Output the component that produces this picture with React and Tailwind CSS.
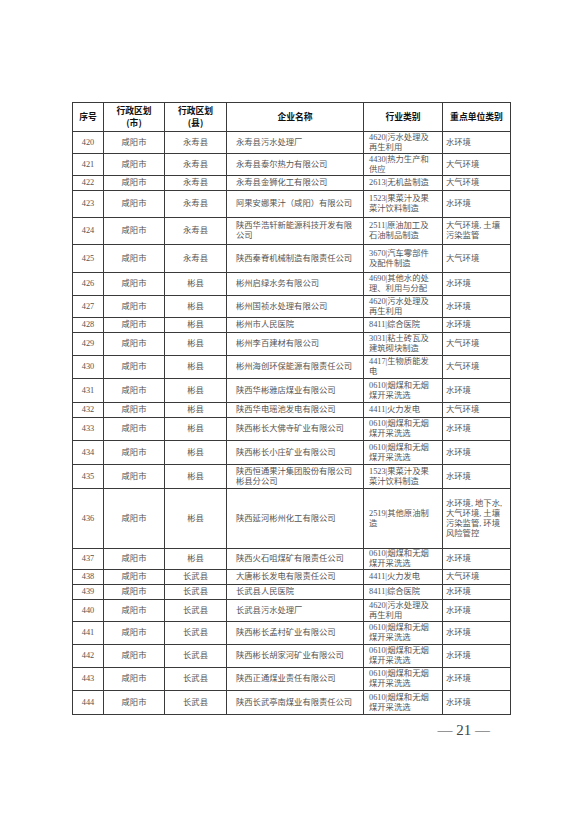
import React from 'react';

const rows = [
  { no: '420', county: '永寿县', name: ['永寿县污水处理厂'], ind: ['4620|污水处理及', '再生利用'], type: ['水环境'], h: 'h-[22px]' },
  { no: '421', county: '永寿县', name: ['永寿县泰尔热力有限公司'], ind: ['4430|热力生产和', '供应'], type: ['大气环境'], h: 'h-[22px]' },
  { no: '422', county: '永寿县', name: ['永寿县金狮化工有限公司'], ind: ['2613|无机盐制造'], type: ['大气环境'], h: 'h-[15px]' },
  { no: '423', county: '永寿县', name: ['阿果安娜果汁（咸阳）有限公司'], ind: ['1523|果菜汁及果', '菜汁饮料制造'], type: ['水环境'], h: 'h-[27px]' },
  { no: '424', county: '永寿县', name: ['陕西华浩轩新能源科技开发有限', '公司'], ind: ['2511|原油加工及', '石油制品制造'], type: ['大气环境, 土壤', '污染监管'], h: 'h-[27px]' },
  { no: '425', county: '永寿县', name: ['陕西秦脊机械制造有限责任公司'], ind: ['3670|汽车零部件', '及配件制造'], type: ['大气环境'], h: 'h-[28px]' },
  { no: '426', county: '彬县', name: ['彬州启绿水务有限公司'], ind: ['4690|其他水的处', '理、利用与分配'], type: ['水环境'], h: 'h-[23px]' },
  { no: '427', county: '彬县', name: ['彬州国祯水处理有限公司'], ind: ['4620|污水处理及', '再生利用'], type: ['水环境'], h: 'h-[22px]' },
  { no: '428', county: '彬县', name: ['彬州市人民医院'], ind: ['8411|综合医院'], type: ['水环境'], h: 'h-[15px]' },
  { no: '429', county: '彬县', name: ['彬州李百建材有限公司'], ind: ['3031|粘土砖瓦及', '建筑砌块制造'], type: ['大气环境'], h: 'h-[23px]' },
  { no: '430', county: '彬县', name: ['彬州海创环保能源有限责任公司'], ind: ['4417|生物质能发', '电'], type: ['大气环境'], h: 'h-[23px]' },
  { no: '431', county: '彬县', name: ['陕西华彬雅店煤业有限公司'], ind: ['0610|烟煤和无烟', '煤开采洗选'], type: ['水环境'], h: 'h-[24px]' },
  { no: '432', county: '彬县', name: ['陕西华电瑶池发电有限公司'], ind: ['4411|火力发电'], type: ['大气环境'], h: 'h-[15px]' },
  { no: '433', county: '彬县', name: ['陕西彬长大佛寺矿业有限公司'], ind: ['0610|烟煤和无烟', '煤开采洗选'], type: ['水环境'], h: 'h-[23px]' },
  { no: '434', county: '彬县', name: ['陕西彬长小庄矿业有限公司'], ind: ['0610|烟煤和无烟', '煤开采洗选'], type: ['水环境'], h: 'h-[24px]' },
  { no: '435', county: '彬县', name: ['陕西恒通果汁集团股份有限公司', '彬县分公司'], ind: ['1523|果菜汁及果', '菜汁饮料制造'], type: ['水环境'], h: 'h-[24px]' },
  { no: '436', county: '彬县', name: ['陕西延河彬州化工有限公司'], ind: ['2519|其他原油制', '造'], type: ['水环境, 地下水,', '大气环境, 土壤', '污染监管, 环境', '风险管控'], h: 'h-[60px]' },
  { no: '437', county: '彬县', name: ['陕西火石咀煤矿有限责任公司'], ind: ['0610|烟煤和无烟', '煤开采洗选'], type: ['水环境'], h: 'h-[21px]' },
  { no: '438', county: '长武县', name: ['大唐彬长发电有限责任公司'], ind: ['4411|火力发电'], type: ['大气环境'], h: 'h-[15px]' },
  { no: '439', county: '长武县', name: ['长武县人民医院'], ind: ['8411|综合医院'], type: ['水环境'], h: 'h-[15px]' },
  { no: '440', county: '长武县', name: ['长武县污水处理厂'], ind: ['4620|污水处理及', '再生利用'], type: ['水环境'], h: 'h-[22px]' },
  { no: '441', county: '长武县', name: ['陕西彬长孟村矿业有限公司'], ind: ['0610|烟煤和无烟', '煤开采洗选'], type: ['水环境'], h: 'h-[23px]' },
  { no: '442', county: '长武县', name: ['陕西彬长胡家河矿业有限公司'], ind: ['0610|烟煤和无烟', '煤开采洗选'], type: ['水环境'], h: 'h-[23px]' },
  { no: '443', county: '长武县', name: ['陕西正通煤业责任有限公司'], ind: ['0610|烟煤和无烟', '煤开采洗选'], type: ['水环境'], h: 'h-[23px]' },
  { no: '444', county: '长武县', name: ['陕西长武亭南煤业有限责任公司'], ind: ['0610|烟煤和无烟', '煤开采洗选'], type: ['水环境'], h: 'h-[24px]' },
];

function Lines({ lines }) {
  return lines.map((l, i) => (
    <div key={i} className="whitespace-nowrap">{l}</div>
  ));
}

export default function App() {
  const cell = 'border border-[#3a3a3a] p-0 align-middle';
  return (
    <div className="w-[578px] h-[818px] bg-white pt-[102px] pl-[72px] font-['Liberation_Serif','Noto_Sans_CJK_SC',serif] text-[#555]">
      <table className="table-fixed border-collapse w-[438px] text-[8.3px] leading-[10px]">
        <colgroup>
          <col className="w-[31px]" />
          <col className="w-[61px]" />
          <col className="w-[62px]" />
          <col className="w-[137px]" />
          <col className="w-[79px]" />
          <col className="w-[68px]" />
        </colgroup>
        <thead>
          <tr className="h-[29px] font-['Noto_Sans_CJK_SC',sans-serif] font-bold text-[8.8px] leading-[12px] text-[#111]">
            <th className={cell}>序号</th>
            <th className={cell}>
              <div>行政区划</div>
              <div>(市)</div>
            </th>
            <th className={cell}>
              <div>行政区划</div>
              <div>(县)</div>
            </th>
            <th className={cell}>企业名称</th>
            <th className={cell}>行业类别</th>
            <th className={cell}>重点单位类别</th>
          </tr>
        </thead>
        <tbody>
          {rows.map((r) => (
            <tr key={r.no} className={r.h}>
              <td className={`${cell} text-center`}>{r.no}</td>
              <td className={`${cell} text-center`}>咸阳市</td>
              <td className={`${cell} text-center`}>{r.county}</td>
              <td className={`${cell} pl-[9px]`}><Lines lines={r.name} /></td>
              <td className={`${cell} pl-[5px]`}><Lines lines={r.ind} /></td>
              <td className={`${cell} pl-[3px]`}><Lines lines={r.type} /></td>
            </tr>
          ))}
        </tbody>
      </table>
      <div className="w-[438px] flex justify-end pr-[20px] mt-[6px] text-[15px] leading-[18px] text-[#444]">
        — 21 —
      </div>
    </div>
  );
}
